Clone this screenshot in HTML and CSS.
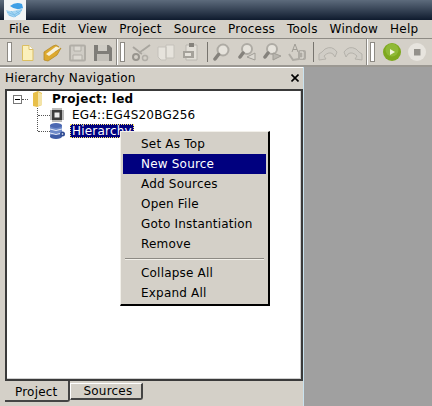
FILE: index.html
```html
<!DOCTYPE html>
<html lang="en">
<head>
  <meta charset="UTF-8">
  <title>Hierarchy Navigation</title>
  <link rel="stylesheet" href="styles.css">
</head>
<body>
  <div class="titlebar">
    <div class="appicon">
      <svg width="22" height="20" viewBox="0 0 22 20">
        <path d="M6 6 Q12 1 18 4 L19 8 Q12 11 6 6 Z" fill="#3f9fe6"/>
        <path d="M2 10 Q9 13 19 8 L16 14 Q9 19 4 15 Z" fill="#a7d6f2"/>
        <path d="M3 12 L10 15 L18 10 M5 15 L10 17 L15 14 M7 11 L12 17 M12 11 L16 14" stroke="#6fb7e6" fill="none" stroke-width="0.7"/>
      </svg>
    </div>
  </div>

  <div class="menubar">
    <span>File</span><span>Edit</span><span>View</span><span>Project</span><span>Source</span><span>Process</span><span>Tools</span><span>Window</span><span>Help</span>
  </div>

  <div class="toolbar">
    <i class="grip"></i>
    <div class="tools">
      <svg class="tool" viewBox="0 0 20 20"><path d="M4.5 3.5 H11 L15 7.5 V18.5 H4.5 Z" fill="#fbf0bb" stroke="#dcbf62"/><path d="M11 3.5 V7.5 H15" fill="#fff" stroke="#dcbf62"/></svg>
      <svg class="tool" viewBox="0 0 20 20"><path d="M1 18 L1 10 L10 4 L13 3 L16 5 L12 10 L18 6 L14 13 L5 19 Z" fill="#dda92f" stroke="#b58a26" stroke-width="0.8"/><path d="M3 12 L13 4.5 L17 6 L6 14 Z" fill="#f7f1dc"/></svg>
      <svg class="tool" viewBox="0 0 20 20"><rect x="2" y="3.5" width="15" height="15" rx="1" fill="#cfccc5" stroke="#b1aea7" stroke-width="2"/><path d="M6 4 H13 V9 H6 Z M5 13 H14 V18 H5 Z" fill="#dcd9d2" stroke="#b1aea7"/></svg>
      <svg class="tool" viewBox="0 0 20 20"><path d="M1 3 H16 L19 6 V19 H1 Z" fill="#7f7d78"/><path d="M5 3 H14 V9 H5 Z" fill="#cfccc5"/><path d="M4 12 H16 V19 H4 Z" fill="#c3c0b9"/></svg>
    </div>
    <i class="endline"></i>
    <i class="grip second"></i>
    <div class="tools">
      <svg class="tool" viewBox="0 0 20 20"><path d="M1 5 L10 12 M18 3 L7 11" stroke="#a9a69f" stroke-width="2" fill="none"/><path d="M10 10 L18 16" stroke="#cfccc5" stroke-width="2"/><circle cx="4" cy="15" r="3" fill="none" stroke="#98958e" stroke-width="2"/><circle cx="13" cy="16" r="2.5" fill="none" stroke="#b1aea7" stroke-width="1.5"/></svg>
      <svg class="tool" viewBox="0 0 20 20"><path d="M1 5 H9 V18 H4 L1 15 Z M9 3 H17 V16 H9 Z" fill="#e6e3dc" stroke="#c4c1ba"/></svg>
      <svg class="tool" viewBox="0 0 20 20"><path d="M4 3 H15 V18 H4 Z" fill="#e2dfd8" stroke="#b9b6af"/><path d="M7 1 H12 V5 H7 Z" fill="#85827c"/><path d="M1 9 H12 V16 H1 Z" fill="#a5a29b"/><path d="M3 11 H9 V14 H3 Z" fill="#e6e3dc"/></svg>
      <i class="sep"></i>
      <svg class="tool" viewBox="0 0 20 20"><circle cx="10" cy="8" r="5.5" fill="#e6e3dc" stroke="#aeaba4" stroke-width="2"/><path d="M5.5 12.5 L2 17" stroke="#85827c" stroke-width="3.5" stroke-linecap="round"/></svg>
      <svg class="tool" viewBox="0 0 20 20"><circle cx="9" cy="7" r="5" fill="#e6e3dc" stroke="#aeaba4" stroke-width="2"/><path d="M5 11 L2 15" stroke="#85827c" stroke-width="3.5" stroke-linecap="round"/><path d="M17 11 V18 L9 15 Z" fill="#dcd9d2" stroke="#a09d96"/></svg>
      <svg class="tool" viewBox="0 0 20 20"><circle cx="9" cy="7" r="5" fill="#e6e3dc" stroke="#aeaba4" stroke-width="2"/><path d="M5 11 L2 15" stroke="#85827c" stroke-width="3.5" stroke-linecap="round"/><path d="M10 11 L18 14 L10 18 Z" fill="#b9b6af" stroke="#a09d96"/></svg>
      <svg class="tool" viewBox="0 0 20 20"><path d="M4 10 L7 2 L10 10 M5 7.5 H9" stroke="#a09d96" fill="none"/><rect x="10" y="8" width="8" height="10" rx="2" fill="#aeaba4"/><path d="M12 10 H15 V16 H12" stroke="#e6e3dc" fill="none"/><path d="M1 12 L5 18 L11 17" stroke="#aeaba4" stroke-width="2" fill="none"/></svg>
      <i class="sep tight"></i>
      <svg class="tool" viewBox="0 0 20 20"><path d="M1 12 L1 18 L8 17 L6 14 Q11 9 15 12 L17 15 L19 10 Q14 3 7 7 L4 10 Z" fill="#d0cdc6" stroke="#b5b2ab"/></svg>
      <svg class="tool" viewBox="0 0 20 20"><path d="M19 12 L19 18 L12 17 L14 14 Q9 9 5 12 L3 15 L1 10 Q6 3 13 7 L16 10 Z" fill="#d0cdc6" stroke="#b5b2ab"/></svg>
    </div>
    <i class="endline"></i>
    <i class="grip second"></i>
    <div class="tools">
      <svg class="tool" viewBox="0 0 20 20"><circle cx="10" cy="10" r="9" fill="#7ea81e"/><circle cx="10" cy="8" r="6.5" fill="#8fb936"/><path d="M8 7 L13 10 L8 13 Z" fill="#f1f4dc"/></svg>
      <svg class="tool" viewBox="0 0 20 20"><circle cx="10" cy="10" r="9" fill="#e7e4de"/><rect x="7" y="7" width="6.5" height="6.5" fill="#94918b"/></svg>
    </div>
  </div>

  <div class="workspace">
    <div class="dock">
      <div class="dockhead">
        <span>Hierarchy Navigation</span>
        <svg class="closex" width="8" height="8" viewBox="0 0 8 8"><path d="M0.5 0.5 L7.5 7.5 M7.5 0.5 L0.5 7.5" stroke="#000" stroke-width="1.6"/></svg>
      </div>
      <div class="treebox">
        <div class="node project">
          <svg class="expander" width="9" height="9" viewBox="0 0 9 9"><rect x="0.5" y="0.5" width="8" height="8" fill="#fff" stroke="#777"/><path d="M2 4.5 H7" stroke="#000"/></svg>
          <i class="dots short"></i>
          <svg class="ico folder" width="18" height="16" viewBox="0 0 18 16"><path d="M5 2 L10 0 L14 2 V14 L9 16 L5 15 Z" fill="#e8c04a"/><path d="M10 1 L14 3 V14 L10 15 Z" fill="#f3e3a6"/></svg>
          <b>Project: led</b>
        </div>
        <div class="node child">
          <i class="dots"></i>
          <svg class="ico" width="16" height="14" viewBox="0 0 16 14"><path d="M3 0 V14 M5 0 V14 M7 0 V14 M9 0 V14 M11 0 V14 M0 3 H14 M0 5 H14 M0 7 H14 M0 9 H14 M0 11 H14" stroke="#777"/><rect x="2" y="2" width="10" height="10" fill="#3d3d3d"/><rect x="4.5" y="4.5" width="5" height="5" fill="#ececec"/></svg>
          <span class="label">EG4::EG4S20BG256</span>
        </div>
        <div class="node child">
          <i class="dots"></i>
          <svg class="ico" width="16" height="16" viewBox="0 0 16 16"><rect x="0" y="2" width="12" height="12" fill="#6e8ac9"/><ellipse cx="6" cy="2.5" rx="6" ry="2.5" fill="#4b68b2"/><ellipse cx="6" cy="13.5" rx="6" ry="2.5" fill="#3f5ca6"/><path d="M0 6 Q6 9 12 6 M0 10 Q6 13 12 10" stroke="#e6ebf7" fill="none"/><circle cx="12.5" cy="11" r="2.5" fill="#2f4b93"/><circle cx="12.5" cy="11" r="0.8" fill="#fff"/></svg>
          <span class="label selected">Hierarchy</span>
        </div>
        <div class="treeline"></div>
      </div>
      <div class="tabs">
        <span class="tab active">Project</span>
        <span class="tab">Sources</span>
      </div>
    </div>
    <div class="canvas"></div>
  </div>

  <div class="menu">
    <div class="item">Set As Top</div>
    <div class="item hot">New Source</div>
    <div class="item">Add Sources</div>
    <div class="item">Open File</div>
    <div class="item">Goto Instantiation</div>
    <div class="item">Remove</div>
    <div class="rule"></div>
    <div class="item">Collapse All</div>
    <div class="item">Expand All</div>
  </div>
</body>
</html>
```

FILE: styles.css
```css
* {
  box-sizing: border-box;
}
body {
  margin: 0;
  height: 406px;
  overflow: hidden;
  display: flex;
  flex-direction: column;
  background-color: #d4d0c8;
  color: #000;
  font-family: "DejaVu Sans", sans-serif;
  font-size: 12px;
  letter-spacing: 0.2px;
}
.titlebar {
  height: 20px;
  flex: none;
  padding-left: 4px;
  background: linear-gradient(#5d6b7c, #0f1b2e);
}
.appicon {
  width: 22px;
  height: 20px;
  background-color: #f2f4f5;
}
.menubar {
  height: 19px;
  flex: none;
  display: flex;
  align-items: center;
  gap: 12px;
  padding-left: 9px;
  border-bottom: 1px solid #8d8a84;
}
.toolbar {
  height: 28px;
  flex: none;
  display: flex;
  align-items: center;
  border-bottom: 2px solid #9b9892;
  padding-left: 7px;
}
.tools {
  display: flex;
  align-items: center;
  gap: 5px;
  flex: none;
}
.tool {
  width: 20px;
  height: 20px;
  flex: none;
}
.grip {
  width: 5px;
  height: 20px;
  margin-right: 6px;
  border: 1px solid #8d8a84;
  background-color: #fff;
  flex: none;
}
.grip.second {
  margin-right: 7px;
}
.endline {
  width: 2px;
  height: 26px;
  margin: 0 2px 0 3px;
  background-color: #8d8a84;
  border-right: 1px solid #fff;
  flex: none;
}
.sep {
  width: 1px;
  height: 20px;
  background-color: #77746e;
  flex: none;
}
.sep.tight {
  margin-right: -1px;
}
.workspace {
  flex: 1;
  display: flex;
  min-height: 0;
}
.dock {
  width: 304px;
  flex: none;
  display: flex;
  flex-direction: column;
  padding-bottom: 4px;
  border-right: 1px solid #c9e2ee;
}
.dockhead {
  height: 21px;
  flex: none;
  display: flex;
  align-items: center;
  justify-content: space-between;
  padding: 0 4px 0 5px;
  border-top: 1px solid #fff;
}
.treebox {
  position: relative;
  flex: 1;
  margin: 1px 0 -1px 5px;
  background-color: #fff;
  border: 2px solid #3a3a3a;
  box-shadow: inset -1px -1px 0 #cfcfcf;
  padding-left: 6px;
}
.node {
  display: flex;
  align-items: center;
  height: 16px;
}
.expander {
  flex: none;
}
.dots {
  width: 12px;
  border-top: 1px dotted #555;
  flex: none;
}
.dots.short {
  width: 6px;
}
.child {
  padding-left: 25px;
}
.ico {
  flex: none;
  margin-right: 4px;
}
.folder {
  margin-right: 6px;
}
.project b {
  letter-spacing: 0.3px;
}
.label {
  padding: 0 1px;
  border: 1px solid transparent;
  line-height: 12px;
}
.selected {
  background-color: #00007f;
  color: #fff;
  border: 1px dotted #ffe96b;
}
.treeline {
  position: absolute;
  left: 30px;
  top: 17px;
  height: 23px;
  border-left: 1px dotted #555;
}
.tabs {
  height: 22px;
  flex: none;
  display: flex;
  align-items: flex-start;
  padding-left: 5px;
}
.tab {
  height: 17px;
  margin-top: 3px;
  padding: 0 9px 0 12px;
  line-height: 14px;
  border: 1px solid #444;
  border-top-color: #fff;
  border-left-color: #fff;
  border-radius: 0 0 3px 0;
  border-right-width: 2px;
  border-bottom-width: 2px;
}
.tab.active {
  height: 22px;
  margin-top: 0;
  line-height: 24px;
  border-top: none;
  border-left: none;
  padding: 0 11px 0 10px;
}
.canvas {
  flex: 1;
  background-color: #a0a0a0;
}
.menu {
  position: absolute;
  left: 120px;
  top: 131px;
  width: 150px;
  height: 175px;
  padding: 2px;
  background-color: #d4d0c8;
  border: 1px solid #000;
  border-top-color: #f2f0ea;
  border-left-color: #f2f0ea;
  border-right-width: 2px;
  border-bottom-width: 2px;
}
.item {
  height: 20px;
  line-height: 20px;
  padding-left: 18px;
}
.hot {
  background-color: #00007f;
  color: #fff;
}
.rule {
  height: 2px;
  margin: 4px 2px 3px;
  background-color: #8d8a84;
  border-bottom: 1px solid #f2f0ea;
}
```
